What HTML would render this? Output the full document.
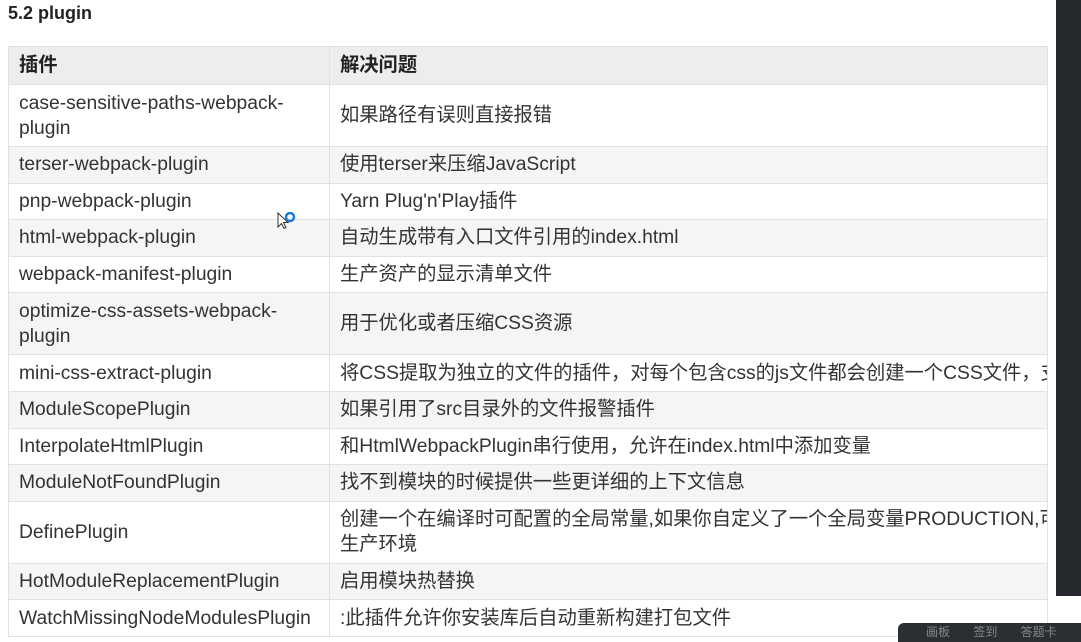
<!DOCTYPE html>
<html><head><meta charset="utf-8"><style>
body{margin:0;width:1081px;height:642px;background:#fff;overflow:hidden;position:relative;font-family:"Liberation Sans","Noto Sans CJK SC",sans-serif;color:#333}
h2{position:absolute;left:8px;top:3px;margin:0;font-size:18px;font-weight:bold;color:#222}
table{position:absolute;left:8px;top:46px;width:1040px;border-collapse:collapse;font-size:19.3px;table-layout:fixed}
td,th{border:1px solid #dfe2e5;padding:0 10px;text-align:left;line-height:25px;vertical-align:middle;white-space:nowrap;overflow:hidden}
th{height:37px;background:#eceded;font-weight:bold;color:#222}
td{height:35.6px}
td.d{height:61px}
tr:nth-child(odd) td{background:#f5f5f5}
.panel{position:absolute;left:1056px;top:0;width:25px;height:596px;background:#25282d}
.bar{position:absolute;left:898px;top:623px;width:183px;height:19px;background:#2b2e33;border-radius:6px 0 0 0;color:#888;font-size:12px;line-height:19px;padding-left:28px;box-sizing:border-box;word-spacing:20px}
.cur{position:absolute;left:277px;top:212px}
</style></head><body>
<h2>5.2 plugin</h2>
<table>
<colgroup><col style="width:321px"><col></colgroup>
<tr><th>插件</th><th>解决问题</th></tr>
<tr><td class="d">case-sensitive-paths-webpack-<br>plugin</td><td>如果路径有误则直接报错</td></tr>
<tr><td>terser-webpack-plugin</td><td>使用terser来压缩JavaScript</td></tr>
<tr><td>pnp-webpack-plugin</td><td>Yarn Plug'n'Play插件</td></tr>
<tr><td>html-webpack-plugin</td><td>自动生成带有入口文件引用的index.html</td></tr>
<tr><td>webpack-manifest-plugin</td><td>生产资产的显示清单文件</td></tr>
<tr><td class="d">optimize-css-assets-webpack-<br>plugin</td><td>用于优化或者压缩CSS资源</td></tr>
<tr><td>mini-css-extract-plugin</td><td>将CSS提取为独立的文件的插件，对每个包含css的js文件都会创建一个CSS文件，支</td></tr>
<tr><td>ModuleScopePlugin</td><td>如果引用了src目录外的文件报警插件</td></tr>
<tr><td>InterpolateHtmlPlugin</td><td>和HtmlWebpackPlugin串行使用，允许在index.html中添加变量</td></tr>
<tr><td>ModuleNotFoundPlugin</td><td>找不到模块的时候提供一些更详细的上下文信息</td></tr>
<tr><td class="d">DefinePlugin</td><td>创建一个在编译时可配置的全局常量,如果你自定义了一个全局变量PRODUCTION,可<br>生产环境</td></tr>
<tr><td>HotModuleReplacementPlugin</td><td>启用模块热替换</td></tr>
<tr><td>WatchMissingNodeModulesPlugin</td><td>:此插件允许你安装库后自动重新构建打包文件</td></tr>
</table>
<svg class="cur" width="22" height="22" viewBox="0 0 22 22"><path d="M1 1v14l3.5-3.5 2.5 5 2-1-2.5-5H11z" fill="#fff" stroke="#333" stroke-width="1"/><circle cx="13" cy="5" r="4" fill="none" stroke="#1a7ad8" stroke-width="2.5"/></svg>
<div class="panel"></div>
<div class="bar">画板 签到 答题卡</div>
</body></html>
